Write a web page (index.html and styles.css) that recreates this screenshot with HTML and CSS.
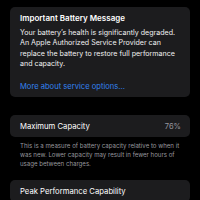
FILE: index.html
```html
<!DOCTYPE html>
<html>
<head>
<meta charset="utf-8">
<link rel="stylesheet" href="styles.css">
</head>
<body>
<div class="page">
  <section class="card message">
    <h1 class="title">Important Battery Message</h1>
    <p class="body">Your battery’s health is significantly degraded. An Apple Authorized Service Provider can replace the battery to restore full performance and capacity.</p>
    <a class="link">More about service options...</a>
  </section>
  <section class="card row">
    <span class="label">Maximum Capacity</span>
    <span class="value">76%</span>
  </section>
  <p class="note">This is a measure of battery capacity relative to when it was new. Lower capacity may result in fewer hours of usage between charges.</p>
  <section class="card row peak">
    <span class="label">Peak Performance Capability</span>
  </section>
</div>
</body>
</html>
```
FILE: styles.css
```css
html, body {
  margin: 0;
  padding: 0;
  background: #000;
}
body {
  width: 200px;
  height: 200px;
  overflow: hidden;
  font-family: Inter, "Noto Sans", sans-serif;
  color: #fff;
}
.page {
  padding: 7px 10px 0;
  display: flex;
  flex-direction: column;
}
.card {
  background: #1c1c1e;
  border-radius: 5px;
}
.message {
  padding: 5px 10px 5px;
  display: flex;
  flex-direction: column;
}
.title {
  margin: 0;
  font-size: 8px;
  line-height: 12px;
  font-weight: 600;
}
.body {
  margin: 4px 0 0;
  font-size: 7.1px;
  line-height: 10.3px;
  color: #f2f2f2;
}
.link {
  margin-top: 13px;
  font-size: 7.6px;
  line-height: 10px;
  color: #3282f0;
}
.row {
  margin-top: 18px;
  height: 22px;
  padding: 0 9px 0 10px;
  display: flex;
  align-items: center;
  justify-content: space-between;
}
.label {
  font-size: 7.7px;
}
.value {
  font-size: 7.5px;
  color: #98989f;
}
.note {
  margin: 3.5px 0 0;
  padding: 0 10px;
  font-size: 6.1px;
  line-height: 9px;
  color: #98989e;
}
.peak {
  margin-top: 12.5px;
}
```
